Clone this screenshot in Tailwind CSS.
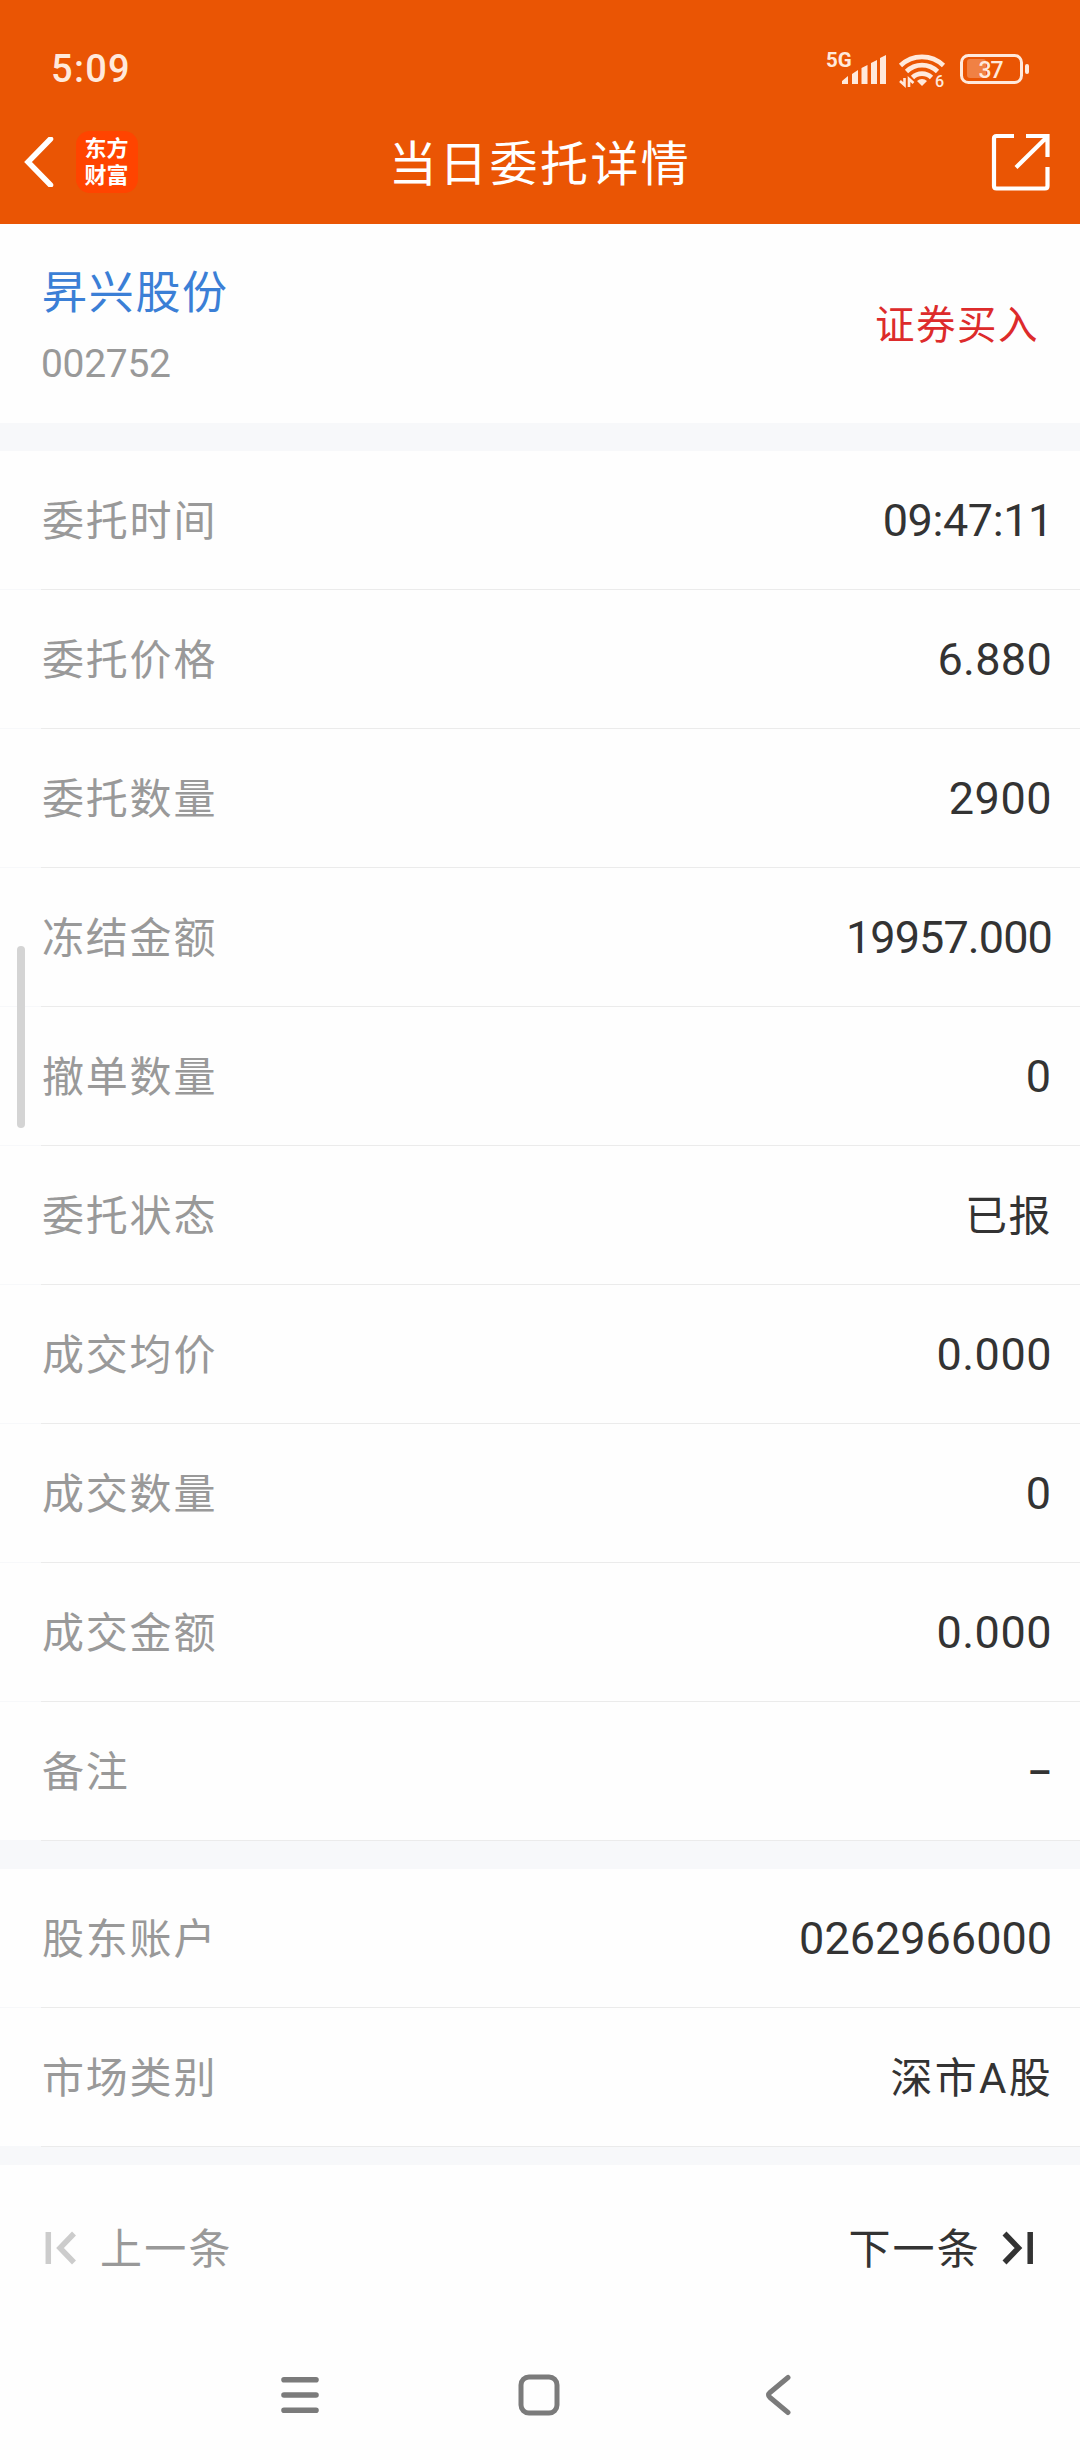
<!DOCTYPE html>
<html lang="zh-CN">
<head>
  <meta charset="UTF-8">
  <meta name="viewport" content="width=device-width, initial-scale=1.0">
  <title>当日委托详情</title>
  <script src="https://cdn.jsdelivr.net/npm/@tailwindcss/browser@4"></script>
</head>
<body class="bg-[#fefefe] font-[Roboto,'Noto_Sans_CJK_SC',sans-serif] text-[#333333]">
  <div class="relative w-[1080px] h-[2460px] overflow-hidden flex flex-col">

    <!-- Header -->
    <header class="bg-[#ea5504] h-[224px] flex flex-col">
      <!-- Status bar -->
      <div class="h-[100px] pt-[37px] pl-[51px] pr-[50px] flex justify-between items-center text-[#ffe9dc]">
        <span class="text-[38px] leading-none font-medium tracking-[1.300px]">5:09</span>
        <svg class="w-[206px] h-[40px] overflow-visible" viewBox="824 48 206 40" fill="none">
          <text x="826" y="66" font-size="20.500" font-weight="700" fill="currentColor">5G</text>
          <g fill="currentColor">
            <path d="M842 83v-3l6-5v8zM852 83V73l6-4v14zM861.500 83V67l6-3v19zM871 83V62l6-3v24zM880 83V57l6-3v29z"/>
          </g>
          <g stroke="currentColor" stroke-width="4.600">
            <path d="M900.500 64.500a31 31 0 0 1 43 0"/>
            <path d="M906.500 70.500a22 22 0 0 1 31 0"/>
            <path d="M912.500 76.500a13.500 13.500 0 0 1 19 0"/>
          </g>
          <path d="M917 80a7.500 7.500 0 0 1 10 0l-5 5z" fill="currentColor"/>
          <path d="M904.500 77v7l-4.500-4M909 86v-8l4.500 4" stroke="currentColor" stroke-width="2.600"/>
          <text x="935" y="86" font-size="16" font-weight="500" fill="currentColor">6</text>
          <rect x="961.500" y="54.500" width="60" height="27" rx="7" stroke="currentColor" stroke-width="3"/>
          <rect x="967" y="58" width="19" height="19" rx="3" fill="currentColor" fill-opacity=".3"/>
          <text x="978.500" y="76.500" font-size="23" font-weight="500" fill="currentColor" textLength="25">37</text>
          <rect x="1025" y="63" width="4" height="10" rx="2" fill="currentColor"/>
        </svg>
      </div>
      <!-- Title bar -->
      <div class="h-[124px] pl-[24px] pr-[30px] flex items-center justify-between text-white">
        <div class="w-[150px] flex items-center">
          <svg class="w-[30px] h-[50px]" viewBox="0 0 30 50" fill="none" stroke="currentColor" stroke-width="5.500" stroke-linecap="round">
            <path d="M26.500 2L4 25l22.500 23"/>
          </svg>
          <div class="ml-[22px] w-[62px] h-[62px] pb-[4px] pr-[1px] rounded-[14px] bg-[#ff4400] flex flex-col items-center justify-center font-['Noto_Sans_CJK_SC',sans-serif] font-bold text-[22px] leading-[27px]">
            <span>东方</span>
            <span>财富</span>
          </div>
        </div>
        <h1 class="pt-[5px] pl-[4px] text-[48px] tracking-[2.400px] whitespace-nowrap -mr-[2px]">当日委托详情</h1>
        <div class="w-[150px] flex justify-end">
          <svg class="w-[60px] h-[60px]" viewBox="0 0 60 60" fill="none" stroke="currentColor" stroke-width="4.200">
            <path d="M24 4H6.500Q4 4 4 6.500V54q0 2.500 2.500 2.500H55q2.500 0 2.500-2.500V35"/>
            <path d="M36 4h21.500v21M57 5L26 35.500"/>
          </svg>
        </div>
      </div>
    </header>

    <!-- Stock -->
    <section class="h-[199px] pl-[42px] pr-[41px] flex items-center justify-between">
      <div class="pt-[3px] flex flex-col">
        <span class="text-[45px] leading-[60px] tracking-[1.700px] text-[#3b7fd6]">昇兴股份</span>
        <span class="mt-[17px] -ml-px text-[39px] leading-[46px] tracking-[-0.300px] text-[#999999]">002752</span>
      </div>
      <span class="pt-[4px] text-[39.500px] tracking-[1.500px] text-[#dd2b2b]">证券买入</span>
    </section>

    <div class="h-[28px] bg-[#f7f8fa]"></div>

    <!-- Order details -->
    <section class="bg-[#f7f8fa] text-[45px] leading-[60px]">
      <div class="h-[138px] pt-[2px] pl-[42px] pr-[28px] bg-[#fefefe] flex items-center justify-between">
        <span class="pt-[2px] text-[42px] tracking-[1.800px] text-[#999999]">委托时间</span>
        <span class="-mr-px tracking-[-0.400px]">09:47:11</span>
      </div>
      <div class="ml-[41px] h-px bg-[#ebebeb]"></div>
      <div class="h-[138px] pt-[2px] pl-[42px] pr-[28px] bg-[#fefefe] flex items-center justify-between">
        <span class="pt-[2px] text-[42px] tracking-[1.800px] text-[#999999]">委托价格</span>
        <span class="tracking-[0.300px]">6.880</span>
      </div>
      <div class="ml-[41px] h-px bg-[#ebebeb]"></div>
      <div class="h-[138px] pt-[2px] pl-[42px] pr-[28px] bg-[#fefefe] flex items-center justify-between">
        <span class="pt-[2px] text-[42px] tracking-[1.800px] text-[#999999]">委托数量</span>
        <span class="tracking-[0.500px]">2900</span>
      </div>
      <div class="ml-[41px] h-px bg-[#ebebeb]"></div>
      <div class="h-[138px] pt-[2px] pl-[42px] pr-[28px] bg-[#fefefe] flex items-center justify-between">
        <span class="pt-[2px] text-[42px] tracking-[1.800px] text-[#999999]">冻结金额</span>
        <span class="tracking-[-0.900px]">19957.000</span>
      </div>
      <div class="ml-[41px] h-px bg-[#ebebeb]"></div>
      <div class="h-[138px] pt-[2px] pl-[42px] pr-[28px] bg-[#fefefe] flex items-center justify-between">
        <span class="pt-[2px] text-[42px] tracking-[1.800px] text-[#999999]">撤单数量</span>
        <span class="pr-px">0</span>
      </div>
      <div class="ml-[41px] h-px bg-[#ebebeb]"></div>
      <div class="h-[138px] pt-[2px] pl-[42px] pr-[28px] bg-[#fefefe] flex items-center justify-between">
        <span class="pt-[2px] text-[42px] tracking-[1.800px] text-[#999999]">委托状态</span>
        <span class="pt-[2px] text-[42px] tracking-[1.500px]">已报</span>
      </div>
      <div class="ml-[41px] h-px bg-[#ebebeb]"></div>
      <div class="h-[138px] pt-[2px] pl-[42px] pr-[28px] bg-[#fefefe] flex items-center justify-between">
        <span class="pt-[2px] text-[42px] tracking-[1.800px] text-[#999999]">成交均价</span>
        <span class="tracking-[0.500px]">0.000</span>
      </div>
      <div class="ml-[41px] h-px bg-[#ebebeb]"></div>
      <div class="h-[138px] pt-[2px] pl-[42px] pr-[28px] bg-[#fefefe] flex items-center justify-between">
        <span class="pt-[2px] text-[42px] tracking-[1.800px] text-[#999999]">成交数量</span>
        <span class="pr-px">0</span>
      </div>
      <div class="ml-[41px] h-px bg-[#ebebeb]"></div>
      <div class="h-[138px] pt-[2px] pl-[42px] pr-[28px] bg-[#fefefe] flex items-center justify-between">
        <span class="pt-[2px] text-[42px] tracking-[1.800px] text-[#999999]">成交金额</span>
        <span class="tracking-[0.500px]">0.000</span>
      </div>
      <div class="ml-[41px] h-px bg-[#ebebeb]"></div>
      <div class="h-[138px] pt-[2px] pl-[42px] pr-[28px] bg-[#fefefe] flex items-center justify-between">
        <span class="pt-[2px] text-[42px] tracking-[1.800px] text-[#999999]">备注</span>
        <span class="pt-[2px] text-[38px] font-medium">–</span>
      </div>
      <div class="ml-[41px] h-px bg-[#ebebeb]"></div>
    </section>

    <div class="h-[28px] bg-[#f7f8fa]"></div>

    <!-- Account -->
    <section class="bg-[#f7f8fa] text-[45px] leading-[60px]">
      <div class="h-[138px] pt-[2px] pl-[42px] pr-[28px] bg-[#fefefe] flex items-center justify-between">
        <span class="pt-[2px] text-[42px] tracking-[1.800px] text-[#999999]">股东账户</span>
        <span>0262966000</span>
      </div>
      <div class="ml-[41px] h-px bg-[#ebebeb]"></div>
      <div class="h-[138px] pt-[2px] pl-[42px] pr-[28px] bg-[#fefefe] flex items-center justify-between">
        <span class="pt-[2px] text-[42px] tracking-[1.800px] text-[#999999]">市场类别</span>
        <span class="pt-[2px] -mr-px text-[42px] tracking-[2.300px]">深市A股</span>
      </div>
      <div class="ml-[41px] h-px bg-[#ebebeb]"></div>
    </section>

    <div class="h-[18px] bg-[#f7f8fa]"></div>

    <!-- Prev / next -->
    <div class="h-[165px] pl-[45px] pr-[47px] flex items-center justify-between text-[42px]">
      <div class="flex items-center">
        <svg class="w-[31px] h-[34px] text-[#cccccc]" viewBox="0 0 31 34" fill="none" stroke="currentColor" stroke-width="5.500">
          <path d="M3.300 1v32M29 2.500L15 17l14 14.500"/>
        </svg>
        <span class="pt-[4px] ml-[24px] tracking-[2.300px] text-[#999999]">上一条</span>
      </div>
      <div class="flex items-center">
        <span class="pt-[4px] mr-[21px] tracking-[2.200px]">下一条</span>
        <svg class="w-[31px] h-[34px]" viewBox="0 0 31 34" fill="none" stroke="currentColor" stroke-width="5.500">
          <path d="M28.200 1v32M2.500 2.500L16.500 17 2.500 31.500"/>
        </svg>
      </div>
    </div>

    <!-- System navigation -->
    <nav class="h-[130px] pl-[280px] pr-[288px] flex items-center text-[#7b7b7b]">
      <svg class="w-[40px] h-[44px]" viewBox="0 0 40 44" fill="none" stroke="currentColor" stroke-width="5.600" stroke-linecap="round">
        <path d="M4 6.700h32M4 22h32M4 37.300h32"/>
      </svg>
      <svg class="ml-[198px] w-[42px] h-[42px]" viewBox="0 0 42 42" fill="none" stroke="currentColor" stroke-width="5">
        <rect x="3" y="3" width="36" height="36" rx="8"/>
      </svg>
      <svg class="ml-auto w-[28px] h-[42px]" viewBox="0 0 28 42" fill="none" stroke="currentColor" stroke-width="5" stroke-linecap="round" stroke-linejoin="round">
        <path d="M24 3.500L6 18.500q-3 2.500 0 5L24 38.500"/>
      </svg>
    </nav>

    <!-- Scroll indicator -->
    <div class="absolute left-[17px] top-[946px] w-[8px] h-[182px] rounded-full bg-[#d4d4d4]"></div>
  </div>
</body>
</html>
